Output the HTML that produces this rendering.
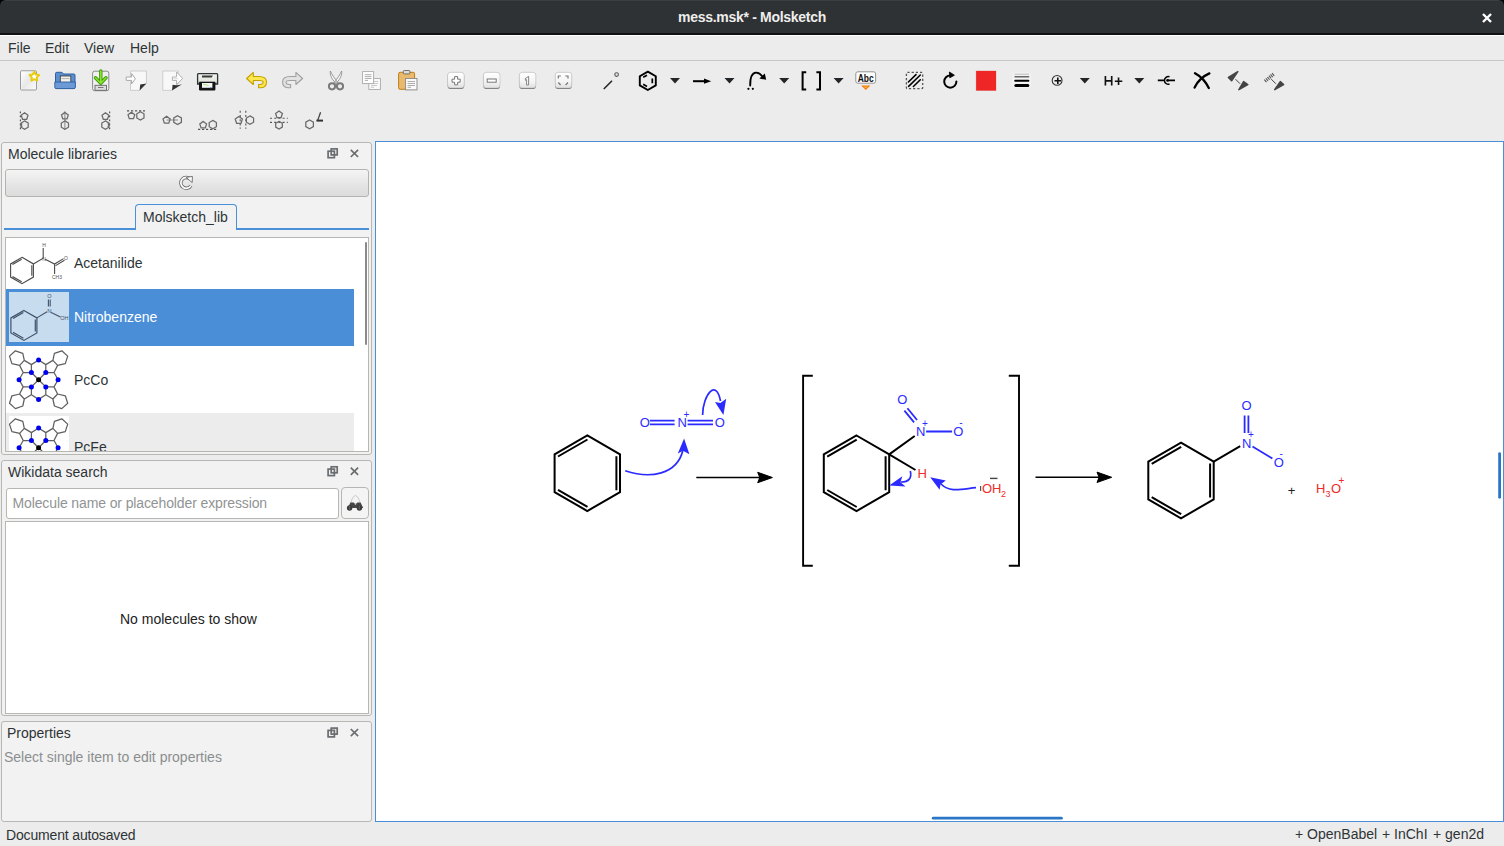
<!DOCTYPE html>
<html><head><meta charset="utf-8">
<style>
*{margin:0;padding:0;box-sizing:border-box}
html,body{width:1504px;height:846px;overflow:hidden;background:#ececec;font-family:"Liberation Sans",sans-serif;font-size:14px;color:#2e3436}
.a{position:absolute}
#title{left:0;top:0;width:1504px;height:35px;background:#2e3235;border-top:1px solid #3a3f42;border-bottom:2px solid #0f1213}
#title .t{left:0;width:1504px;top:8px;text-align:center;color:#eeeeec;font-weight:bold;font-size:14px;letter-spacing:-0.3px}
#menubar{left:0;top:35px;width:1504px;height:26px;background:#ececec;border-top:1px solid #fff;border-bottom:1px solid #c6c6c6}
.menu{top:4px}
.dock{background:#f2f2f2;border:1px solid #b6b6b3;border-radius:3px}
.canvas{left:375px;top:141px;width:1129px;height:681px;background:#fff;border:1px solid #4a90d9}
.status{top:826px}
svg{overflow:visible}
</style></head><body>
<div id="title" class="a"><div class="t a">mess.msk* - Molsketch</div>
<svg class="a" style="left:1480px;top:10px" width="14" height="14"><path d="M3 3L11 11M11 3L3 11" stroke="#fff" stroke-width="2.4"/></svg><svg class="a" style="left:1498px;top:-1px" width="6" height="6"><path d="M0 0H6V6Q6 0 0 0Z" fill="#000"/></svg><svg class="a" style="left:0;top:-1px" width="6" height="6"><path d="M6 0H0V6Q0 0 6 0Z" fill="#000"/></svg>
</div>
<div id="menubar" class="a">
<div class="a menu" style="left:8px">File</div>
<div class="a menu" style="left:45px">Edit</div>
<div class="a menu" style="left:84px">View</div>
<div class="a menu" style="left:130px">Help</div>
</div>

<svg class="a" style="left:0;top:0" width="1504" height="140" viewBox="0 0 1504 140"><defs>
<linearGradient id="gpage" x1="0" y1="0" x2="1" y2="1"><stop offset="0" stop-color="#fff"/><stop offset="0.5" stop-color="#e8e8e8"/><stop offset="1" stop-color="#fafafa"/></linearGradient>
<linearGradient id="gzb" x1="0" y1="0" x2="0" y2="1"><stop offset="0" stop-color="#fff"/><stop offset="0.6" stop-color="#f4f4f4"/><stop offset="1" stop-color="#e0e0e0"/></linearGradient>
<linearGradient id="gprn" x1="0" y1="0" x2="0" y2="1"><stop offset="0" stop-color="#f4f4f2"/><stop offset="0.7" stop-color="#e4e6e0"/><stop offset="1" stop-color="#9a9d96"/></linearGradient>
</defs><path d="M670.0 78 L680.0 78 L675.0 83.4Z" fill="#232629"/>
<path d="M724.5 78 L734.5 78 L729.5 83.4Z" fill="#232629"/>
<path d="M779.2 78 L789.2 78 L784.2 83.4Z" fill="#232629"/>
<path d="M833.6 78 L843.6 78 L838.6 83.4Z" fill="#232629"/>
<path d="M1079.8 78 L1089.8 78 L1084.8 83.4Z" fill="#232629"/>
<path d="M1134.3 78 L1144.3 78 L1139.3 83.4Z" fill="#232629"/>
<rect x="20.5" y="70.8" width="16" height="19.2" rx="1" fill="#f6f6f6" stroke="#9a9a9a" stroke-width="1"/>
<rect x="21.5" y="71.8" width="14" height="17.2" fill="url(#gpage)"/>

<polygon points="34.3,71.6 35.8,74.5 39.1,75.1 36.8,77.4 37.2,80.6 34.3,79.2 31.4,80.6 31.8,77.4 29.5,75.1 32.8,74.5" fill="#fff" stroke="#e8cc10" stroke-width="2" stroke-linejoin="round"/>
<path d="M55.5 73.5 Q55.5 72.3 56.8 72.3 L62 72.3 L63.5 74 L73.8 74 Q75 74 75 75.2 L75 87.2 Q75 88.3 73.8 88.3 L56.8 88.3 Q55.5 88.3 55.5 87 Z" fill="#5b8fd0" stroke="#2f5f9f" stroke-width="1"/>
<rect x="60.3" y="76" width="10.5" height="7" fill="#f4f1ea" stroke="#333" stroke-width="0.8"/>
<path d="M61.5 78.6 H69.5" stroke="#aaa" stroke-width="0.9"/>
<path d="M54.8 82 L75.3 82 L75.3 87.4 Q75.3 88.6 74 88.6 L56.2 88.6 Q54.8 88.6 54.8 87.4Z" fill="#6c9ad6" stroke="#2f5f9f" stroke-width="0.9"/>
<rect x="92.6" y="71.2" width="16.2" height="19.5" rx="2" fill="#f0f0f0" stroke="#8a8a8a" stroke-width="1"/>
<rect x="95" y="85.3" width="11.5" height="5" fill="#ddd" stroke="#666" stroke-width="0.9"/>
<path d="M98 87.5 H103.5" stroke="#777" stroke-width="1"/>
<path d="M100.8 71 V82 M95.5 77.8 L100.8 83.2 L106 77.8" fill="none" stroke="#3e9a06" stroke-width="3.4" stroke-linecap="round" stroke-linejoin="round"/>
<path d="M100.8 71 V82 M95.5 77.8 L100.8 83.2 L106 77.8" fill="none" stroke="#8ae234" stroke-width="1.6" stroke-linecap="round" stroke-linejoin="round"/>
<path d="M130.5 71 H146.4 V83.4 L139.6 90.4 H130.5Z" fill="#f8f8f8" stroke="#c8c8c8" stroke-width="0.9"/>
<path d="M146.4 83.4 L139.6 90.4 L140.2 84.6 Z" fill="#333"/>
<path d="M126.2 77 H131.6 V73.6 L135.4 78.7 L131.6 83.9 V80.4 H126.2Z" fill="#fff" stroke="#a8a8a8" stroke-width="1" stroke-linejoin="round"/>
<path d="M162.8 71 H178.4 V83 L172 90.4 H162.8Z" fill="#f8f8f8" stroke="#c8c8c8" stroke-width="0.9"/>
<path d="M182 84.2 L172 90.4 L172.6 84.8 Q177 86 182 84.2Z" fill="#333"/>
<path d="M172.4 77 H176.6 V72 L182.6 78.4 L176.6 84.6 V80.4 H172.4Z" fill="#fff" stroke="#b0b0b0" stroke-width="1" stroke-linejoin="round"/><path d="M173.5 78.7 H178.5" stroke="#ccc" stroke-width="0.7"/>
<path d="M198.3 73.6 H216.8 Q217.6 73.6 217.6 74.6 V84 H197.6 V74.6 Q197.6 73.6 198.3 73.6Z" fill="url(#gprn)" stroke="#2e3436" stroke-width="1.3"/>
<path d="M202 75.4 H213 L211.6 77.6 H202Z" fill="#3a3a3a"/>
<rect x="199" y="81.8" width="16.4" height="8.7" rx="1" fill="#141414"/>
<rect x="202" y="83" width="10.4" height="4.8" fill="#f6f6f6"/>
<path d="M203.2 84 L208.5 85.6" stroke="#a6e27a" stroke-width="1"/><rect x="210" y="87" width="1.6" height="1.2" fill="#6aa0e0"/>
<path d="M246.6 78.5 L253.3 72.4 L253.3 76.5 L259 76.5 Q266.5 76.5 266.5 82 Q266.5 87.8 260.3 87.8 L258.6 87.8 L258.6 84.5 L259.8 84.5 Q263.2 84.5 263.2 82 Q263.2 80.5 259 80.5 L253.3 80.5 L253.3 84.5Z" fill="#fce94f" stroke="#c4a000" stroke-width="1.1" stroke-linejoin="round"/>
<path d="M302.6 78.5 L295.9 72.4 L295.9 76.5 L290 76.5 Q282.6 76.5 282.6 82 Q282.6 87.8 288.8 87.8 L290.6 87.8 L290.6 84.5 L289.4 84.5 Q286 84.5 286 82 Q286 80.5 290.2 80.5 L295.9 80.5 L295.9 84.5Z" fill="#e2e2e2" stroke="#a0a0a0" stroke-width="1.1" stroke-linejoin="round"/>
<path d="M330.4 71 C329.6 75 332 80 337.2 84.4 L338.2 83 C334.6 78.6 331.8 74.4 330.4 71Z M341.6 71 C342.4 75 340 80 334.8 84.4 L333.8 83 C337.4 78.6 340.2 74.4 341.6 71Z" fill="#fafafa" stroke="#8c8c8c" stroke-width="0.9" stroke-linejoin="round"/>
<circle cx="332" cy="86.3" r="3.1" fill="none" stroke="#7a7a7a" stroke-width="2"/><circle cx="340" cy="86.3" r="3.1" fill="none" stroke="#7a7a7a" stroke-width="2"/>
<rect x="368.8" y="78.5" width="11.6" height="11" fill="#fafafa" stroke="#aaa" stroke-width="0.9"/>
<path d="M371 81.5 H378 M371 83.5 H378 M371 85.5 H377 M371 87.3 H374" stroke="#bbb" stroke-width="0.8"/>
<rect x="362.6" y="71.6" width="11" height="12" fill="#fff" stroke="#aaa" stroke-width="0.9"/>
<path d="M364.8 74.7 H371.5 M364.8 76.6 H371.5 M364.8 78.5 H371.5 M364.8 80.4 H368" stroke="#999" stroke-width="0.8"/>
<rect x="398.6" y="72.3" width="16" height="17" rx="1.5" fill="#e9b96e" stroke="#c17d11" stroke-width="1"/>
<rect x="403.3" y="70.5" width="6.6" height="3.4" rx="1" fill="#ddd" stroke="#555" stroke-width="0.8"/>
<rect x="405.6" y="78.5" width="11.4" height="11.4" fill="#fafafa" stroke="#888" stroke-width="0.9"/>
<path d="M407.6 81.5 H415 M407.6 83.5 H415 M407.6 85.5 H415 M407.6 87.3 H411" stroke="#999" stroke-width="0.8"/>
<rect x="447.6" y="72.6" width="16.6" height="16.4" rx="3" fill="#6e6e6e"/>
<rect x="447.6" y="72.3" width="16.6" height="15.6" rx="3" fill="url(#gzb)" stroke="#c4c4c4" stroke-width="0.7"/>
<rect x="483.4" y="72.6" width="16.6" height="16.4" rx="3" fill="#6e6e6e"/>
<rect x="483.4" y="72.3" width="16.6" height="15.6" rx="3" fill="url(#gzb)" stroke="#c4c4c4" stroke-width="0.7"/>
<rect x="519.3" y="72.6" width="16.6" height="16.4" rx="3" fill="#6e6e6e"/>
<rect x="519.3" y="72.3" width="16.6" height="15.6" rx="3" fill="url(#gzb)" stroke="#c4c4c4" stroke-width="0.7"/>
<rect x="555.2" y="72.6" width="16.6" height="16.4" rx="3" fill="#6e6e6e"/>
<rect x="555.2" y="72.3" width="16.6" height="15.6" rx="3" fill="url(#gzb)" stroke="#c4c4c4" stroke-width="0.7"/>
<path d="M454.6 76.6 H457.6 V79.2 H460.2 V82.2 H457.6 V84.8 H454.6 V82.2 H452 V79.2 H454.6Z" fill="#fff" stroke="#777" stroke-width="1"/>
<rect x="487.2" y="79" width="9" height="3.2" fill="#fff" stroke="#777" stroke-width="1"/>
<path d="M525.2 78.6 L528.6 76.4 V85 H526.6 V79.6 L525.6 80.4Z" fill="#fff" stroke="#777" stroke-width="0.9"/>
<path d="M558.3 78.5 V76 H560.8 M565.3 76 H568 V78.5 M558.3 82.5 L560.6 85 M568 82.5 L565.6 85" fill="none" stroke="#777" stroke-width="1.2"/>
<path d="M603.8 89 L612 80.8" stroke="#222" stroke-width="1.5"/>
<circle cx="616.6" cy="74.6" r="1.8" fill="none" stroke="#555" stroke-width="1.1"/>
<polygon points="647.8,71.6 655.8,76.2 655.8,85.4 647.8,90.0 639.8,85.4 639.8,76.2" fill="none" stroke="#000" stroke-width="1.9" stroke-linejoin="round"/>
<path d="M643.2 77.3 L647 75.2 M652.3 78.4 V83.2 M643.2 84.3 L647 86.4" stroke="#000" stroke-width="1.7"/>
<path d="M693 81.2 H705" stroke="#000" stroke-width="2"/><path d="M711.2 81.2 L704 78.6 L704 83.8Z" fill="#000"/>
<path d="M750.2 85.6 Q750 73 756 72.6 Q759.5 72.5 762.5 76.5" fill="none" stroke="#000" stroke-width="1.9" stroke-linecap="round"/>
<path d="M766.2 79.8 L759.4 78.6 L764.8 73.4Z" fill="#000"/>
<circle cx="748.4" cy="88.8" r="1.1" fill="#000"/><circle cx="752.8" cy="88.8" r="1.1" fill="#000"/>
<path d="M806.2 72.2 H802.6 V89.6 H806.2 M816.4 72.2 H820 V89.6 H816.4" fill="none" stroke="#000" stroke-width="2"/>
<rect x="855.8" y="71.8" width="19.8" height="11.4" rx="2" fill="#fff" stroke="#888" stroke-width="0.9"/>
<text x="865.7" y="81.8" font-family="Liberation Sans" font-weight="bold" font-size="10.6" text-anchor="middle" fill="#111" textLength="16" lengthAdjust="spacingAndGlyphs">Abc</text>
<path d="M861.2 85.6 H870.4 L865.8 90Z" fill="#f57900"/><path d="M863.4 86.4 H868.2 L865.8 88.6Z" fill="#fcaf3e"/>
<rect x="906.4" y="72.4" width="16.3" height="16.3" rx="1" fill="none" stroke="#555" stroke-width="1.3" stroke-dasharray="2.2 2"/>
<path d="M908.4 82 L916 74.6 M908.6 86.3 L920.3 75 M913.4 86.5 L920.3 79.8" stroke="#000" stroke-width="1.6" stroke-linecap="round"/>
<path d="M950.3 75.5 A6.1 6.1 0 1 0 956.4 81.6" fill="none" stroke="#000" stroke-width="2" stroke-linecap="round"/>
<path d="M949.4 72 L954.4 75.2 L949.8 77.8Z" fill="#000" stroke="#000" stroke-width="0.8" stroke-linejoin="round"/>
<rect x="975.8" y="70.5" width="20.6" height="20.5" fill="#ee2626" stroke="#e8fafa" stroke-width="0.6"/>
<rect x="1012.5" y="72.5" width="18.5" height="15.5" rx="3" fill="#f8f8f8" opacity="0.6"/><path d="M1015 74.2 H1028.6" stroke="#bbb" stroke-width="1" stroke-linecap="round"/><path d="M1015 76.85 H1028.6" stroke="#666" stroke-width="1.5" stroke-linecap="round"/><path d="M1015.2 80.8 H1028.4" stroke="#000" stroke-width="2" stroke-linecap="round"/><path d="M1015.8 85.4 H1027.8" stroke="#000" stroke-width="3" stroke-linecap="round"/>
<circle cx="1057.1" cy="80.4" r="4.9" fill="none" stroke="#333" stroke-width="1.1"/>
<path d="M1054.5 80.8 H1061 M1057.8 77.4 V84" stroke="#111" stroke-width="1.6"/>
<path d="M1105.4 76 V85.6 M1111.7 76 V85.6 M1105.4 80.8 H1111.7 M1114.8 81.2 H1122.3 M1118.55 77.4 V85" stroke="#111" stroke-width="1.65" fill="none"/>
<path d="M1157.8 80.4 H1164.6 M1167.6 80.4 H1175" stroke="#000" stroke-width="1.7"/>
<path d="M1169.5 76.8 A3.8 3.8 0 1 0 1169.5 84" fill="none" stroke="#000" stroke-width="1.5"/><circle cx="1167.6" cy="80.4" r="1.4" fill="#000"/>
<path d="M1195 73.2 Q1204 78 1208.8 88 M1209.4 73.4 Q1199 78 1194.6 87.6" fill="none" stroke="#000" stroke-width="2.3" stroke-linecap="round"/>
<path d="M1237.8 71.6 L1228.4 77.4 L1231.6 80.8Z" fill="#444" stroke="#444" stroke-width="1.5" stroke-linejoin="round"/>
<path d="M1235.5 79.2 L1240 83.7" stroke="#444" stroke-width="1"/>
<path d="M1238.9 89.6 L1243.6 81.6 L1247.8 84.6Z" fill="#444" stroke="#444" stroke-width="1.5" stroke-linejoin="round"/>
<path d="M1265 81.2 L1274.2 73.6" stroke="#555" stroke-width="3.4" stroke-dasharray="1.1 0.9"/>
<path d="M1271.3 79.2 L1275.8 83.7" stroke="#444" stroke-width="1"/>
<path d="M1274.7 89.6 L1280.3 81.6 L1283.6 84.6Z" fill="#444" stroke="#444" stroke-width="1.5" stroke-linejoin="round"/>
<path d="M20.4 111.6 V129.6" stroke="#555" stroke-width="1.2" stroke-dasharray="1.6 2.4"/>
<polygon points="24.6,112.8 28.0,115.3 26.7,119.3 22.5,119.3 21.2,115.3" stroke="#6a6a6a" stroke-width="1.25" fill="none"/>
<polygon points="24.6,120.9 28.2,123.0 28.2,127.2 24.6,129.3 21.0,127.2 21.0,123.0" stroke="#6a6a6a" stroke-width="1.25" fill="none"/>
<path d="M22.2 123.4 L21 125.1 L22.2 126.8" stroke="#6a6a6a" stroke-width="1.25" fill="none"/>
<path d="M64.9 111.4 V129.8" stroke="#888" stroke-width="1"/>
<polygon points="64.9,112.4 68.3,114.9 67.0,118.9 62.8,118.9 61.5,114.9" stroke="#6a6a6a" stroke-width="1.25" fill="none"/>
<polygon points="64.9,120.9 68.5,123.0 68.5,127.2 64.9,129.3 61.3,127.2 61.3,123.0" stroke="#6a6a6a" stroke-width="1.25" fill="none"/>
<path d="M109.6 111.6 V129.6" stroke="#555" stroke-width="1.2" stroke-dasharray="1.6 2.4"/>
<polygon points="105.4,112.8 108.8,115.3 107.5,119.3 103.3,119.3 102.0,115.3" stroke="#6a6a6a" stroke-width="1.25" fill="none"/>
<polygon points="105.4,120.9 109.0,123.0 109.0,127.2 105.4,129.3 101.8,127.2 101.8,123.0" stroke="#6a6a6a" stroke-width="1.25" fill="none"/>
<path d="M107.8 123.4 L109 125.1 L107.8 126.8" stroke="#6a6a6a" stroke-width="1.25" fill="none"/>
<path d="M127 110.8 H145" stroke="#555" stroke-width="1.2" stroke-dasharray="2.2 1.8"/>
<polygon points="131.4,112.2 134.8,114.7 133.5,118.7 129.3,118.7 128.0,114.7" stroke="#6a6a6a" stroke-width="1.25" fill="none"/>
<polygon points="140.4,111.7 144.0,113.8 144.0,118.0 140.4,120.1 136.8,118.0 136.8,113.8" stroke="#6a6a6a" stroke-width="1.25" fill="none"/>
<path d="M166.6 120 H178" stroke="#888" stroke-width="1"/>
<polygon points="166.6,116.3 170.2,118.9 168.8,123.2 164.4,123.2 163.0,118.9" stroke="#6a6a6a" stroke-width="1.25" fill="none"/>
<polygon points="177.6,115.7 181.4,117.9 181.4,122.3 177.6,124.5 173.8,122.3 173.8,117.9" stroke="#6a6a6a" stroke-width="1.25" fill="none"/>
<path d="M198 129.4 H217.2" stroke="#555" stroke-width="1.2" stroke-dasharray="2.2 1.8"/>
<polygon points="203.2,121.4 206.6,123.9 205.3,127.9 201.1,127.9 199.8,123.9" stroke="#6a6a6a" stroke-width="1.25" fill="none"/>
<polygon points="212.8,120.4 216.4,122.5 216.4,126.7 212.8,128.8 209.2,126.7 209.2,122.5" stroke="#6a6a6a" stroke-width="1.25" fill="none"/>
<path d="M240.2 110.8 V128.8 M245.8 110.8 V128.8" stroke="#555" stroke-width="1.1" stroke-dasharray="2 2.2"/>
<polygon points="238.8,116.4 242.4,119.0 241.0,123.3 236.6,123.3 235.2,119.0" stroke="#6a6a6a" stroke-width="1.25" fill="none"/>
<polygon points="250.0,115.9 253.6,118.0 253.6,122.2 250.0,124.3 246.4,122.2 246.4,118.0" stroke="#6a6a6a" stroke-width="1.25" fill="none"/>
<path d="M270 118.2 H287.8 M270 122.4 H287.8" stroke="#555" stroke-width="1.1" stroke-dasharray="2 2.2"/>
<polygon points="279.0,111.0 282.4,113.5 281.1,117.5 276.9,117.5 275.6,113.5" stroke="#6a6a6a" stroke-width="1.25" fill="none"/>
<polygon points="279.0,121.4 282.3,123.3 282.3,127.1 279.0,129.0 275.7,127.1 275.7,123.3" stroke="#6a6a6a" stroke-width="1.25" fill="none"/>
<polygon points="309.6,120.0 313.4,122.2 313.4,126.6 309.6,128.8 305.8,126.6 305.8,122.2" stroke="#6a6a6a" stroke-width="1.25" fill="none"/>
<path d="M320.6 112.2 L317.6 120.6" stroke="#444" stroke-width="1.3"/><path d="M316.4 120.6 H323" stroke="#333" stroke-width="2"/>
</svg>

<!-- docks -->
<div class="a dock" style="left:1px;top:142px;width:371px;height:313px"></div>
<div class="a" style="left:8px;top:146px">Molecule libraries</div>
<div class="a dock" style="left:1px;top:460px;width:371px;height:256px"></div>
<div class="a" style="left:8px;top:464px">Wikidata search</div>
<div class="a dock" style="left:1px;top:721px;width:371px;height:101px"></div>
<div class="a" style="left:7px;top:725px">Properties</div>
<div class="a" style="left:4px;top:749px;color:#8b8e8f">Select single item to edit properties</div>

<svg class="a" style="left:320px;top:145px" width="45" height="16" viewBox="320 145 45 16">
<rect x="331.2" y="148.9" width="6" height="6" fill="none" stroke="#6a6e70" stroke-width="1.7"/><rect x="328.1" y="151.2" width="6.3" height="6.5" fill="none" stroke="#6a6e70" stroke-width="1.7"/>
<path d="M350.8 149.8 L358.1 157.0 M358.1 149.8 L350.8 157.0" stroke="#6a6e70" stroke-width="1.7"/>
</svg>
<svg class="a" style="left:320px;top:463px" width="45" height="16" viewBox="320 463 45 16">
<rect x="331.2" y="466.8" width="6" height="6" fill="none" stroke="#6a6e70" stroke-width="1.7"/><rect x="328.1" y="469.1" width="6.3" height="6.5" fill="none" stroke="#6a6e70" stroke-width="1.7"/>
<path d="M350.8 467.7 L358.1 474.9 M358.1 467.7 L350.8 474.9" stroke="#6a6e70" stroke-width="1.7"/>
</svg>
<svg class="a" style="left:320px;top:724px" width="45" height="16" viewBox="320 724 45 16">
<rect x="331.2" y="728.1" width="6" height="6" fill="none" stroke="#6a6e70" stroke-width="1.7"/><rect x="328.1" y="730.4" width="6.3" height="6.5" fill="none" stroke="#6a6e70" stroke-width="1.7"/>
<path d="M350.8 729.0 L358.1 736.2 M358.1 729.0 L350.8 736.2" stroke="#6a6e70" stroke-width="1.7"/>
</svg>
<div class="a" style="left:5px;top:169px;width:364px;height:28px;border:1px solid #b3b3b0;border-radius:3px;background:linear-gradient(#f4f4f4,#e4e4e4 60%,#dcdcdc)"></div>
<svg class="a" style="left:175px;top:172px" width="22" height="22" viewBox="175 172 22 22"><path d="M190.2 179.2 A5.4 5.4 0 1 0 190.9 185.6" fill="none" stroke="#6a6a6a" stroke-width="3.4"/><path d="M190.2 179.2 A5.4 5.4 0 1 0 190.9 185.6" fill="none" stroke="#fff" stroke-width="1.7"/><path d="M186.2 177.4 L192.4 176.4 L192.2 182.6Z" fill="#fff" stroke="#6a6a6a" stroke-width="0.9" stroke-linejoin="round"/></svg>
<div class="a" style="left:4px;top:228px;width:365px;height:2px;background:#4a90d9"></div>
<div class="a" style="left:135px;top:204px;width:102px;height:26px;border:1px solid #4a90d9;border-bottom:none;border-radius:4px 4px 0 0;background:#f2f2f2"></div>
<div class="a" style="left:143px;top:209px">Molsketch_lib</div>
<div class="a" style="left:5px;top:237px;width:364px;height:215px;border:1px solid #b6b6b3;background:#fff;overflow:hidden">
<div class="a" style="left:0;top:50.6px;width:348px;height:57px;background:#4a8ed8"></div>
<div class="a" style="left:3.2px;top:54px;width:60px;height:50px;background:#c8dcf0"></div>
<div class="a" style="left:0;top:175.2px;width:348px;height:42px;background:#ececec"></div>
<div class="a" style="left:3px;top:177.5px;width:60px;height:40px;background:#fff"></div>
<div class="a" style="left:68px;top:16.5px;color:#2e3436">Acetanilide</div>
<div class="a" style="left:68px;top:70.5px;color:#fff">Nitrobenzene</div>
<div class="a" style="left:68px;top:133.5px;color:#2e3436">PcCo</div>
<div class="a" style="left:68px;top:200.5px;color:#2e3436">PcFe</div>
<div class="a" style="left:358.6px;top:3.5px;width:2px;height:103.5px;background:#8a8a8a;border-radius:1px"></div>
<svg class="a" style="left:-6px;top:-238px" width="380" height="460" viewBox="0 0 380 460"><path d="M22.0 257.3 L33.4 263.9 L33.4 277.1 L22.0 283.7 L10.6 277.1 L10.6 263.9Z M12.5 264.6 L21.7 259.3 M31.8 265.2 L31.8 275.8 M12.5 276.4 L21.7 281.7" fill="none" stroke="#4a4a4a" stroke-width="1.1"/><path d="M33.4 263.9 L43.2 258.2 V248 M45.2 259.2 L54.6 264 L63.5 258.6 M54.6 264 V274 M55.6 265.6 L64.5 260.2" fill="none" stroke="#4a4a4a" stroke-width="1.1"/><text x="44" y="247" font-size="5" fill="#555" font-family="Liberation Sans" text-anchor="middle">H</text><text x="44" y="261" font-size="5" fill="#555" font-family="Liberation Sans" text-anchor="middle">N</text><text x="66" y="259.5" font-size="5" fill="#555" font-family="Liberation Sans" text-anchor="middle">O</text><text x="57" y="279" font-size="5" fill="#555" font-family="Liberation Sans" text-anchor="middle">CH3</text><path d="M23.9 310.4 L36.9 317.9 L36.9 332.9 L23.9 340.4 L10.9 332.9 L10.9 317.9Z M13.0 318.5 L23.4 312.5 M35.3 319.4 L35.3 331.4 M13.0 332.3 L23.4 338.3" fill="none" stroke="#3f5168" stroke-width="1.2"/><path d="M36.9 317.9 L47 311.8 M48.4 306.6 V299.6 M50.2 306.6 V299.6 M51.2 312.6 L60.4 317" fill="none" stroke="#3f5168" stroke-width="1.1"/><text x="49.3" y="313.2" font-size="6" fill="#3f5168" font-family="Liberation Sans" text-anchor="middle">N</text><text x="49.3" y="298" font-size="5.5" fill="#3f5168" font-family="Liberation Sans" text-anchor="middle">O</text><text x="64.4" y="320.2" font-size="5.5" fill="#3f5168" font-family="Liberation Sans" text-anchor="middle">OH</text><path d="M31.4 372.5 L31.4 364.6 L24.3 360.4 L19.6 365.4 L23.2 372.5Z M24.3 360.4 L22.8 353.4 L15.4 350.8 L9.5 356.1 L11.9 363.6 L19.6 365.4 M31.4 364.6 L38.6 360.0 M23.2 372.5 L19.1 379.7 M31.4 372.5 L38.6 379.7 M31.4 386.9 L31.4 394.8 L24.3 399.0 L19.6 394.0 L23.2 386.9Z M24.3 399.0 L22.8 406.0 L15.4 408.6 L9.5 403.3 L11.9 395.8 L19.6 394.0 M31.4 394.8 L38.6 399.4 M23.2 386.9 L19.1 379.7 M31.4 386.9 L38.6 379.7 M45.8 372.5 L45.8 364.6 L52.9 360.4 L57.6 365.4 L54.0 372.5Z M52.9 360.4 L54.4 353.4 L61.8 350.8 L67.7 356.1 L65.3 363.6 L57.6 365.4 M45.8 364.6 L38.6 360.0 M54.0 372.5 L58.1 379.7 M45.8 372.5 L38.6 379.7 M45.8 386.9 L45.8 394.8 L52.9 399.0 L57.6 394.0 L54.0 386.9Z M52.9 399.0 L54.4 406.0 L61.8 408.6 L67.7 403.3 L65.3 395.8 L57.6 394.0 M45.8 394.8 L38.6 399.4 M54.0 386.9 L58.1 379.7 M45.8 386.9 L38.6 379.7 " fill="none" stroke="#606060" stroke-width="1.25" stroke-linejoin="round"/><circle cx="38.6" cy="360.0" r="2.5" fill="#0000f0"/><circle cx="31.4" cy="372.5" r="2.5" fill="#0000f0"/><circle cx="45.8" cy="372.5" r="2.5" fill="#0000f0"/><circle cx="19.1" cy="379.7" r="2.5" fill="#0000f0"/><circle cx="58.1" cy="379.7" r="2.5" fill="#0000f0"/><circle cx="31.4" cy="386.9" r="2.5" fill="#0000f0"/><circle cx="45.8" cy="386.9" r="2.5" fill="#0000f0"/><circle cx="38.6" cy="399.4" r="2.5" fill="#0000f0"/><circle cx="38.6" cy="379.7" r="2.5" fill="#000"/><path d="M31.4 440.5 L31.4 432.6 L24.3 428.4 L19.6 433.4 L23.2 440.5Z M24.3 428.4 L22.8 421.4 L15.4 418.8 L9.5 424.1 L11.9 431.6 L19.6 433.4 M31.4 432.6 L38.6 428.0 M23.2 440.5 L19.1 447.7 M31.4 440.5 L38.6 447.7 M31.4 454.9 L31.4 462.8 L24.3 467.0 L19.6 462.0 L23.2 454.9Z M24.3 467.0 L22.8 474.0 L15.4 476.6 L9.5 471.3 L11.9 463.8 L19.6 462.0 M31.4 462.8 L38.6 467.4 M23.2 454.9 L19.1 447.7 M31.4 454.9 L38.6 447.7 M45.8 440.5 L45.8 432.6 L52.9 428.4 L57.6 433.4 L54.0 440.5Z M52.9 428.4 L54.4 421.4 L61.8 418.8 L67.7 424.1 L65.3 431.6 L57.6 433.4 M45.8 432.6 L38.6 428.0 M54.0 440.5 L58.1 447.7 M45.8 440.5 L38.6 447.7 M45.8 454.9 L45.8 462.8 L52.9 467.0 L57.6 462.0 L54.0 454.9Z M52.9 467.0 L54.4 474.0 L61.8 476.6 L67.7 471.3 L65.3 463.8 L57.6 462.0 M45.8 462.8 L38.6 467.4 M54.0 454.9 L58.1 447.7 M45.8 454.9 L38.6 447.7 " fill="none" stroke="#606060" stroke-width="1.25" stroke-linejoin="round"/><circle cx="38.6" cy="428.0" r="2.5" fill="#0000f0"/><circle cx="31.4" cy="440.5" r="2.5" fill="#0000f0"/><circle cx="45.8" cy="440.5" r="2.5" fill="#0000f0"/><circle cx="19.1" cy="447.7" r="2.5" fill="#0000f0"/><circle cx="58.1" cy="447.7" r="2.5" fill="#0000f0"/><circle cx="31.4" cy="454.9" r="2.5" fill="#0000f0"/><circle cx="45.8" cy="454.9" r="2.5" fill="#0000f0"/><circle cx="38.6" cy="467.4" r="2.5" fill="#0000f0"/><circle cx="38.6" cy="447.7" r="2.5" fill="#000"/></svg>
</div>
<div class="a" style="left:5.5px;top:487.5px;width:333.5px;height:31px;border:1px solid #b6b6b3;border-radius:3px;background:#fff"></div>
<div class="a" style="left:12.5px;top:495px;color:#919494;letter-spacing:-0.12px">Molecule name or placeholder expression</div>
<div class="a" style="left:341.2px;top:487.2px;width:27.5px;height:31.5px;border:1px solid #b6b6b3;border-radius:4px;background:#f4f4f4"></div>
<svg class="a" style="left:344px;top:492px" width="22" height="20" viewBox="344 492 22 20"><path d="M350.6 503.5 L352.6 497.6 L355.4 495.4 L358.2 497.6 L360.4 503.5Z" fill="#f4f4f4" stroke="#c4c4c4" stroke-width="0.9"/><path d="M347.8 508 L350.4 502.6 L353.8 502.4 L355.5 505 L357.2 502.4 L360.6 502.6 L363.2 508Z" fill="#464646"/><circle cx="349.6" cy="508" r="2.7" fill="#3c3c3c"/><circle cx="359.4" cy="508" r="2.7" fill="#3c3c3c"/><path d="M349.6 506 V509.5 M359.4 506 V509.5" stroke="#777" stroke-width="0.6"/></svg>
<div class="a" style="left:5px;top:521px;width:364px;height:193px;border:1px solid #b6b6b3;background:#fff"></div>
<div class="a" style="left:120px;top:611px;color:#222">No molecules to show</div>


<div class="a canvas"></div>
<svg class="a" style="left:0;top:0" width="1504" height="846" viewBox="0 0 1504 846">
<g fill="none" stroke="#000" stroke-width="2" stroke-linejoin="miter" stroke-linecap="butt">
<path d="M587.3 435.4 L620.0 454.3 L620.0 492.1 L587.3 511.0 L554.6 492.1 L554.6 454.3Z M558.0 456.5 L587.5 439.5 M616.4 456.2 L616.4 490.2 M558.0 489.9 L587.5 506.9"/>
<path d="M856.5 435.5 L889.2 454.4 L889.2 492.2 L856.5 511.1 L823.8 492.2 L823.8 454.4Z M827.2 456.6 L856.7 439.6 M885.6 456.3 L885.6 490.3 M827.2 490.0 L856.7 507.0"/>
<path d="M1181.0 442.7 L1213.7 461.6 L1213.7 499.4 L1181.0 518.3 L1148.3 499.4 L1148.3 461.6Z M1151.7 463.8 L1181.2 446.8 M1210.1 463.5 L1210.1 497.5 M1151.7 497.2 L1181.2 514.2"/>
<path d="M889.2 454.4 L914.7 436 M889.2 454.4 L915.5 470 M1213.7 461.6 L1240.2 446.2"/>
</g>
<g fill="none" stroke="#000" stroke-width="1.6">
<path d="M812.8 375.7 H803.1 V565.8 H812.8 M1008.8 375.7 H1019 V565.8 H1008.8" stroke-width="1.9"/>
<path d="M696.3 477.5 H760 M1035.5 477.3 H1099"/>
</g>
<path d="M772.4 477.5 L757.7 472.3 L759.8 477.5 L757.7 482.7Z M1111.7 477.3 L1097 472.1 L1099.1 477.3 L1097 482.5Z" fill="#000" stroke="#000" stroke-width="1" stroke-linejoin="round"/>
<g fill="none" stroke="#2b2bff" stroke-width="1.8">
<path d="M649.9 420.6 H674.6 M649.9 424.4 H674.6 M687.6 420.6 H713 M687.6 424.4 H713"/>
<path d="M904.4 410.6 L914.1 422.4 M907.4 408.2 L917.1 420 M926.1 431.5 H952.1"/>
<path d="M1244.6 415.5 V433 M1248.4 415.5 V433 M1252.5 446.6 L1272.4 458.6"/>
</g>
<g fill="none" stroke="#2b2bff" stroke-width="1.7">
<path d="M625.2 470.8 C650 479 677 475 683 450"/>
<path d="M702.6 414.9 C703 395 716 378 720.5 401"/>
<path d="M910.3 471 C912 478 909 482 901 482"/>
<path d="M976 487.7 C962 489 950 493 941 484"/>
</g>
<g fill="#2b2bff">
<path d="M684.1 438.5 L677.8 453.6 L683 450.8 L689.4 454.3Z"/>
<path d="M723.4 415.1 L715 402.1 L720.4 403 L726.2 398.8Z"/>
<path d="M889.2 485.4 L902.3 476.2 L900.5 482.3 L905.5 486.6Z"/>
<path d="M930.2 477.3 L939.6 489.8 L940.5 484.5 L945.8 480.6Z"/>
</g>
<g font-family="Liberation Sans" font-size="13" fill="#2b2bff" text-anchor="middle">
<text x="644.7" y="427">O</text><text x="682.2" y="427">N</text><text x="719.9" y="427">O</text>
<text x="902.2" y="404">O</text><text x="920.6" y="435.8">N</text><text x="958.3" y="435.8">O</text>
<text x="1246.6" y="410.2">O</text><text x="1246.6" y="448.1">N</text><text x="1278.8" y="466.8">O</text>
</g>
<g font-family="Liberation Sans" font-size="10" fill="#2b2bff" text-anchor="middle">
<text x="686.3" y="418">+</text><text x="925" y="426.7">+</text><text x="1250.9" y="438.4">+</text>
<text x="961" y="426">-</text><text x="1281.2" y="456.8">-</text>
</g>
<g font-family="Liberation Sans" font-size="13" fill="#ee2a2a">
<text x="917.5" y="478.3">H</text>
<text x="982" y="493.1">OH</text><text x="1001" y="497" font-size="9">2</text>
<text x="1316" y="492.8">H</text><text x="1325.5" y="497" font-size="9">3</text><text x="1331" y="492.8">O</text><text x="1341.3" y="484" font-size="10" text-anchor="middle">+</text>
</g>
<path d="M990 478.4 H997.5" stroke="#444" stroke-width="1.4"/>
<path d="M980.6 486 V491" stroke="#555" stroke-width="1.2"/>
<text x="1291.6" y="495" font-family="Liberation Sans" font-size="13" fill="#222" text-anchor="middle">+</text>
<rect x="931.8" y="816.8" width="131" height="2.8" rx="1.4" fill="#2a76c6"/>
<rect x="1498.2" y="452.2" width="2.8" height="46.5" rx="1.4" fill="#2a76c6"/>
</svg>

<div class="a status" style="left:6px;top:827px;letter-spacing:-0.16px">Document autosaved</div>
<div class="a status" style="left:1295px">+ OpenBabel</div><div class="a status" style="left:1382px">+ InChI</div><div class="a status" style="left:1433px">+ gen2d</div>
</body></html>
